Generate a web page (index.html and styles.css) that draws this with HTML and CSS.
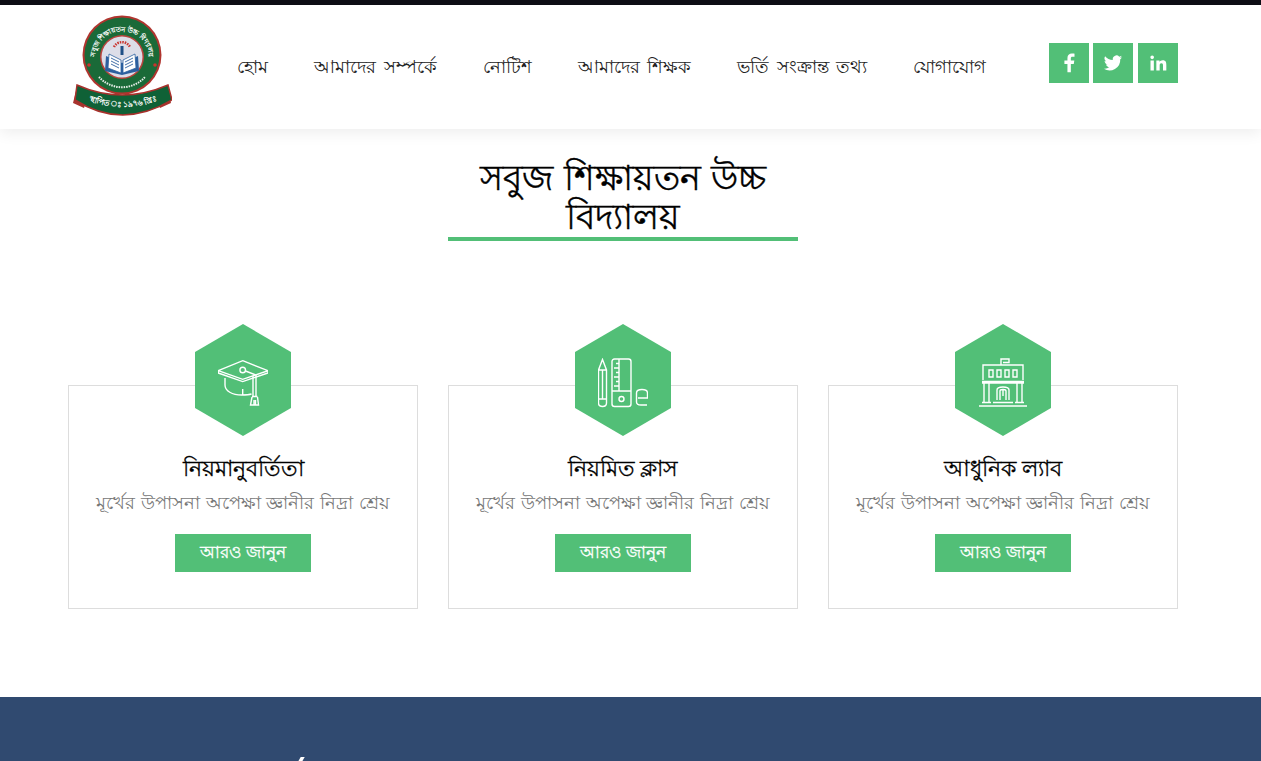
FILE: index.html
```html
<!DOCTYPE html>
<html lang="bn">
<head>
<meta charset="utf-8">
<title>সবুজ শিক্ষায়তন উচ্চ বিদ্যালয়</title>
<link rel="stylesheet" href="styles.css">
</head>
<body>
<header class="header">
  <div class="container header-row">
    <svg class="logo" viewBox="0 0 100 104" width="100" height="104">
      <defs>
        <path id="arc-top" d="M26 56 A27 27 0 1 1 74 56"/>
        <path id="arc-low" d="M6 82 Q50 102 96 82"/>
      </defs>
      <path d="M5 72 L1 88 L12 93 L16 82 Z M95 72 L99 88 L88 93 L84 82 Z" fill="#a8352f"/>
      <circle cx="50" cy="40" r="39.500" fill="#b0352f"/>
      <circle cx="50" cy="40" r="37.500" fill="#1a6a38"/>
      <path d="M5 70 Q50 90 96 70 L100 85 Q50 115 3 85 Z" fill="#0f6136" stroke="#a8312c" stroke-width="1.500"/>
      <circle cx="50" cy="42" r="22" fill="#b9433d"/>
      <circle cx="50" cy="42" r="20.500" fill="#dcdde8"/>
      <path d="M34 41 L50 48 L66 41 L67 56 L50 60 L33 56 Z" fill="#2c5f9e"/>
      <path d="M37 39 L49 45 L49 58 L36 53 Z M51 45 L63 39 L64 53 L51 58 Z" fill="#fff" stroke="#2c5f9e" stroke-width=".8"/>
      <path d="M39 43 L47 47 M39 46 L47 50 M39 49 L47 53 M53 47 L61 43 M53 50 L61 46 M53 53 L61 49" stroke="#2c5f9e" stroke-width=".9"/>
      <rect x="48.500" y="31" width="3" height="9" fill="#1f4f86"/>
      <path d="M42 32 A9 9 0 0 1 58 32" fill="none" stroke="#c9342e" stroke-width="2.500" stroke-dasharray="1.500 1"/>
      <path d="M27 62 A31 31 0 0 0 73 62" fill="none" stroke="#e8efe9" stroke-width="2" stroke-dasharray="1.500 1"/>
      <circle cx="17" cy="50" r="1.800" fill="#c9342e"/>
      <circle cx="83" cy="50" r="1.800" fill="#c9342e"/>
      <text class="logo-ring"><textPath href="#arc-top" startOffset="50%" text-anchor="middle">সবুজ শিক্ষায়তন উচ্চ বিদ্যালয়</textPath></text>
      <text class="logo-band"><textPath href="#arc-low" startOffset="50%" text-anchor="middle">স্থাপিত ঃ ১৯৭৬ খ্রিঃ</textPath></text>
    </svg>
    <nav class="nav">
      <a>হোম</a>
      <a>আমাদের সম্পর্কে</a>
      <a>নোটিশ</a>
      <a>আমাদের শিক্ষক</a>
      <a>ভর্তি সংক্রান্ত তথ্য</a>
      <a>যোগাযোগ</a>
    </nav>
    <div class="social">
      <a class="social-btn"><svg viewBox="0 0 24 24" width="22" height="22"><path d="M14 22v-9h3.200l.6-3.700H14V7c0-1.100.4-1.800 1.900-1.800H18V1.900C17.600 1.800 16.400 1.700 15.100 1.700 12.300 1.700 10.300 3.400 10.300 6.500v2.800H7V13h3.300v9z" fill="#fff"/></svg></a>
      <a class="social-btn"><svg viewBox="0 0 24 24" width="20" height="20"><path d="M23 5.100c-.8.400-1.700.6-2.600.7.900-.6 1.600-1.400 2-2.500-.9.500-1.800.9-2.900 1.100a4.500 4.500 0 0 0-7.700 4.100C8 8.300 4.700 6.500 2.500 3.800a4.500 4.500 0 0 0 1.400 6c-.7 0-1.400-.2-2-.6 0 2.200 1.500 4 3.600 4.500-.7.200-1.400.2-2 .1.600 1.800 2.200 3.100 4.200 3.100A9 9 0 0 1 1 18.800 12.800 12.800 0 0 0 20.700 7.400c.9-.6 1.700-1.400 2.300-2.300z" fill="#fff"/></svg></a>
      <a class="social-btn"><svg viewBox="0 0 24 24" width="20" height="20"><path d="M3 9h4v12H3zM5 3a2.200 2.200 0 1 1 0 4.400A2.200 2.200 0 0 1 5 3zM10 9h3.800v1.700c.6-1 1.900-2 3.800-2 4 0 4.400 2.600 4.400 6V21h-4v-5.600c0-1.400 0-3.100-1.900-3.100s-2.100 1.500-2.100 3V21h-4z" fill="#fff"/></svg></a>
    </div>
  </div>
</header>
<main class="main">
  <h1 class="title">সবুজ শিক্ষায়তন উচ্চ বিদ্যালয়</h1>
  <section class="cards">
    <article class="card">
      <div class="hex">
        <svg viewBox="0 0 50 50" width="50" height="50" class="hex-icon">
          <path d="M24.700 2.700 L50 12.700 L24.700 21.300 L0.300 12.700 Z M0.300 12.700 V15 L24.700 23.600 L50 15 V12.700"/>
          <path d="M7 20 V27 C7 33 14 37 24 37 C28 37 31 36.800 33.500 36 M24.700 31 V37"/>
          <circle cx="24.700" cy="12" r="2.800"/>
          <path d="M27.500 13 L38 17 V38 M35 18 V38 M34 38.500 H39.500 M34 39 L32.500 47 H40.500 L39.500 39 M36 42 V47 M37.500 42 V47"/>
        </svg>
      </div>
      <h2 class="card-title">নিয়মানুবর্তিতা</h2>
      <p class="card-text">মূর্খের উপাসনা অপেক্ষা জ্ঞানীর নিদ্রা শ্রেয়</p>
      <a class="btn">আরও জানুন</a>
    </article>
    <article class="card">
      <div class="hex">
        <svg viewBox="0 0 50 50" width="50" height="50" class="hex-icon">
          <path d="M0.500 12 L4.500 1.500 L8.500 12 V45 Q8.500 48.500 4.500 48.500 Q0.500 48.500 0.500 45 Z M0.500 12 H8.500 M4.500 12 V41 M0.500 41 H8.500"/>
          <rect x="14" y="1" width="19" height="47.500" rx="2.500"/>
          <path d="M21 1 V33 M18 5.500 H21 M16 10 H21 M18 14.500 H21 M16 19 H21 M18 23.500 H21 M16 28 H21 M14 33 H33"/>
          <circle cx="23.500" cy="41" r="2.500"/>
          <path d="M49 47 H43 Q38.500 47 38.500 44 V35 Q38.500 31.500 44 31.500 Q49.500 31.500 49.500 35 V40 H40"/>
        </svg>
      </div>
      <h2 class="card-title">নিয়মিত ক্লাস</h2>
      <p class="card-text">মূর্খের উপাসনা অপেক্ষা জ্ঞানীর নিদ্রা শ্রেয়</p>
      <a class="btn">আরও জানুন</a>
    </article>
    <article class="card">
      <div class="hex">
        <svg viewBox="0 0 50 50" width="50" height="50" class="hex-icon">
          <path d="M1 48 H49 M4 44.500 H13 M15 44.500 H35 M37 44.500 H46"/>
          <path d="M23 7 V1 H31 V4.500 H25 M5 22 V7 H45 V22 M4 23.500 H46 M4 25 H46"/>
          <path d="M11 12 h4 v7 h-4 z M19 12 h4 v7 h-4 z M27 12 h4 v7 h-4 z M35 12 h4 v7 h-4 z"/>
          <path d="M6 25 V44 M11 25 V44 M39 25 V44 M44 25 V44 M19 42 V32 Q19 29 25 29 Q31 29 31 32 V42 M22 42 V33 Q22 31.500 25 31.500 Q28 31.500 28 33 V42 M25 31.500 V38"/>
        </svg>
      </div>
      <h2 class="card-title">আধুনিক ল্যাব</h2>
      <p class="card-text">মূর্খের উপাসনা অপেক্ষা জ্ঞানীর নিদ্রা শ্রেয়</p>
      <a class="btn">আরও জানুন</a>
    </article>
  </section>
</main>
<footer class="footer"><span class="footer-mark"></span></footer>
</body>
</html>
```
FILE: styles.css
```css
* { box-sizing: border-box; }
html, body { height: 761px; overflow: hidden; }
body {
  margin: 0;
  font-family: "Liberation Serif", "Noto Sans", serif;
  color: #000;
  background: #fff;
  border-top: 5px solid #0d0d14;
}
.container { width: 1110px; margin-left: 68px; }
.header {
  height: 124px;
  background: #fff;
  box-shadow: 0 4px 14px rgba(0, 0, 0, .07);
  position: relative;
}
.header-row { display: flex; align-items: flex-start; height: 100%; }
.logo { margin: 10px 0 0 4px; flex: none; }
.nav {
  display: flex;
  gap: 46px;
  margin: 48px 0 0 65px;
  font-size: 18.250px;
  word-spacing: 3px;
  line-height: 28px;
  color: #222;
  white-space: nowrap;
  flex: 1;
}
.social { display: flex; gap: 4.400px; margin: 38px .2px 0 0; }
.social-btn {
  width: 40px;
  height: 40px;
  background: #52bf77;
  display: flex;
  align-items: center;
  justify-content: center;
}
.main { width: 1110px; margin-left: 68px; height: 568px; }
.title {
  width: 350px;
  margin: 0 auto;
  padding-top: 30px;
  font-size: 35px;
  word-spacing: 2px;
  line-height: 39px;
  font-weight: 400;
  text-align: center;
  border-bottom: 4px solid #52bf77;
  height: 112px;
  -webkit-text-stroke: .4px #000;
}
.cards { display: flex; gap: 30px; margin-top: 144px; }
.card {
  width: 350px;
  height: 224px;
  border: 1px solid #ddd;
  display: flex;
  flex-direction: column;
  align-items: center;
}
.hex {
  width: 96px;
  height: 112px;
  margin-top: -62px;
  padding-top: 6px;
  flex: none;
  background: #52bf77;
  clip-path: polygon(50% 0, 100% 25%, 100% 75%, 50% 100%, 0 75%, 0 25%);
  display: flex;
  align-items: center;
  justify-content: center;
}
.hex-icon { fill: none; stroke: #fff; stroke-width: 1.400; }
.card-title {
  margin: 18px 0 0;
  font-size: 22.200px;
  line-height: 30px;
  font-weight: 400;
  -webkit-text-stroke: .3px #000;
}
.card-text {
  margin: 4px 0 0;
  font-size: 18.300px;
  word-spacing: 1.300px;
  line-height: 30px;
  color: #777;
  white-space: nowrap;
}
.btn {
  width: 136px;
  height: 38px;
  margin-top: 16px;
  background: #52bf77;
  color: #fff;
  font-size: 17px;
  line-height: 37px;
  text-align: center;
  -webkit-text-stroke: .3px #fff;
}
.logo-ring { fill: #fff; font-size: 7px; font-weight: 700; }
.logo-band { fill: #fff; font-size: 8px; font-weight: 700; }
.footer { height: 64px; background: #304a70; position: relative; overflow: hidden; }
.footer-mark {
  position: absolute;
  left: 299px;
  top: 60px;
  width: 4px;
  height: 6px;
  background: #fff;
  transform: skewX(-30deg);
}
```
